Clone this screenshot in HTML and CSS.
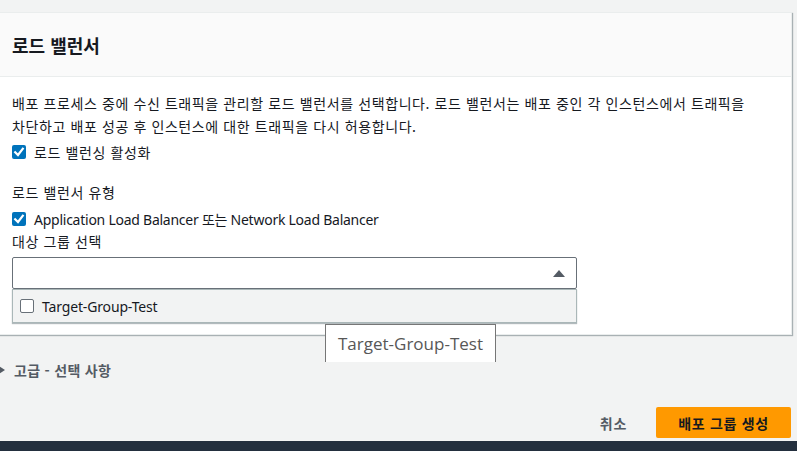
FILE: index.html
```html
<!DOCTYPE html>
<html lang="ko">
<head>
<meta charset="utf-8">
<link rel="stylesheet" href="styles.css">
</head>
<body>
<div class="page">
  <section class="panel">
    <header class="panel-head"><h2 class="title">로드 밸런서</h2></header>
    <div class="panel-body">
      <p class="desc">배포 프로세스 중에 수신 트래픽을 관리할 로드 밸런서를 선택합니다. 로드 밸런서는 배포 중인 각 인스턴스에서 트래픽을 차단하고 배포 성공 후 인스턴스에 대한 트래픽을 다시 허용합니다.</p>
      <label class="check-row first"><span class="cb checked"><svg viewBox="0 0 14 14" width="14" height="14"><path d="M3.2 7.2 L6 10 L10.8 3.8" fill="none" stroke="#fff" stroke-width="2.2" stroke-linecap="square"/></svg></span><span class="ko">로드 밸런싱 활성화</span></label>
      <div class="field-label type ko">로드 밸런서 유형</div>
      <label class="check-row second"><span class="cb checked"><svg viewBox="0 0 14 14" width="14" height="14"><path d="M3.2 7.2 L6 10 L10.8 3.8" fill="none" stroke="#fff" stroke-width="2.2" stroke-linecap="square"/></svg></span><span class="latin">Application Load Balancer 또는 Network Load Balancer</span></label>
      <div class="field-label ko">대상 그룹 선택</div>
      <div class="select">
        <span class="caret-up"></span>
        <div class="menu">
          <label class="menu-item"><span class="cb empty"></span><span class="latin item-text">Target-Group-Test</span></label>
        </div>
      </div>
    </div>
  </section>
  <div class="tooltip">Target-Group-Test</div>
  <div class="expander"><span class="caret-right"></span><span>고급 - 선택 사항</span></div>
  <div class="actions">
    <button class="btn-link">취소</button>
    <button class="btn-primary">배포 그룹 생성</button>
  </div>
  <div class="bottom-bar"></div>
</div>
</body>
</html>
```
FILE: styles.css
```css
html, body {
  margin: 0;
  padding: 0;
  height: 451px;
  overflow: hidden;
  background: #f2f3f3;
}
body {
  font-family: "Noto Sans", "Noto Sans CJK KR", sans-serif;
  font-size: 14px;
  color: #16191f;
  word-break: keep-all;
}
.page {
  position: relative;
  padding-top: 12px;
}
.panel {
  margin: 0 5px 0 -2px;
  background: #fff;
  border: 1px solid #eaeded;
  box-shadow: 1px 1px 1px 0 rgba(0, 28, 36, 0.3);
}
.panel-head {
  height: 63px;
  background: #fafafa;
  border-bottom: 1px solid #eaeded;
  display: flex;
  align-items: center;
  padding: 0 13px;
}
.title {
  margin: 0;
  font-family: "Noto Sans CJK KR", sans-serif;
  font-size: 18px;
  font-weight: 700;
  color: #16191f;
}
.panel-body {
  padding: 15px 8px 45px 13px;
}
.desc, .ko {
  font-family: "Noto Sans CJK KR", sans-serif;
  font-size: 14px;
  letter-spacing: 0.6px;
}
.desc {
  margin: 0;
  line-height: 23px;
  color: #16191f;
  word-break: keep-all;
}
.check-row {
  display: flex;
  align-items: center;
  gap: 8px;
  height: 22px;
}
.check-row.first { margin-top: 3px; }
.check-row.second { margin-top: 5px; }
.field-label {
  height: 22px;
  line-height: 22px;
}
.field-label.type { margin-top: 18px; }
.latin {
  font-family: "Noto Sans", "Noto Sans CJK KR", sans-serif;
  font-size: 14px;
  letter-spacing: -0.25px;
}
.item-text { letter-spacing: -0.15px; }
.cb {
  width: 14px;
  height: 14px;
  border-radius: 2px;
  box-sizing: border-box;
  flex: none;
  display: block;
}
.cb svg { display: block; }
.cb.checked { background: #0073bb; }
.cb.empty { background: #fff; border: 1px solid #687078; }
.select {
  position: relative;
  margin-top: 5px;
  width: 565px;
  height: 32px;
  box-sizing: border-box;
  border: 1px solid #687078;
  border-radius: 2px;
  background: #fff;
}
.caret-up {
  position: absolute;
  right: 11px;
  top: 12px;
  width: 0;
  height: 0;
  border-left: 6px solid transparent;
  border-right: 6px solid transparent;
  border-bottom: 7px solid #545b64;
}
.menu {
  position: absolute;
  left: -1px;
  top: 31px;
  width: 565px;
  height: 34px;
  box-sizing: border-box;
  background: #f2f3f3;
  border: 1px solid #aab7b8;
  box-shadow: 0 1px 1px rgba(0, 28, 36, 0.3);
}
.menu-item {
  display: flex;
  align-items: center;
  gap: 8px;
  height: 32px;
  padding-left: 7px;
  color: #16191f;
}
.tooltip {
  position: absolute;
  left: 325px;
  top: 324px;
  width: 171px;
  height: 38px;
  box-sizing: border-box;
  background: #fff;
  border: 1px solid #767676;
  border-bottom: none;
  font-family: "Open Sans", "Noto Sans", sans-serif;
  font-size: 17px;
  color: #575757;
  padding: 7px 0 0 12px;
  line-height: 24px;
}
.expander {
  margin-top: 24px;
  height: 22px;
  display: flex;
  align-items: center;
  gap: 9px;
  font-family: "Noto Sans CJK KR", sans-serif;
  font-size: 14px;
  font-weight: 700;
  letter-spacing: 0.3px;
  color: #545b64;
}
.caret-right {
  margin-left: -1px;
  width: 0;
  height: 0;
  border-top: 4px solid transparent;
  border-bottom: 4px solid transparent;
  border-left: 6px solid #545b64;
}
.actions {
  margin-top: 26px;
  display: flex;
  justify-content: flex-end;
  align-items: center;
  gap: 29px;
  padding-right: 6px;
}
.btn-link, .btn-primary {
  font-family: "Noto Sans CJK KR", sans-serif;
  font-size: 14px;
  font-weight: 700;
  letter-spacing: 0.7px;
  padding: 0;
}
.btn-link {
  border: none;
  background: none;
  color: #545b64;
}
.btn-primary {
  width: 135px;
  height: 31px;
  border: none;
  border-radius: 2px;
  background: #ff9900;
  color: #16191f;
}
.bottom-bar {
  margin-top: 3px;
  height: 20px;
  background: #232f3e;
}
```
